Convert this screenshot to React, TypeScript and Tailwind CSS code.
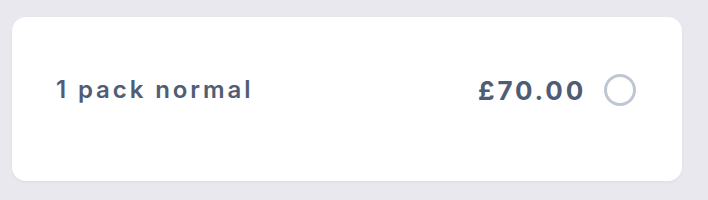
export default function App() {
  return (
    <main className="min-h-[200px] w-full bg-[#e8e8ee] pl-3 pt-[17px]">
      <div className="h-[164px] w-[670px] rounded-[14px] bg-white pl-[44px] pr-[46px] pt-[57px] shadow-[0_1px_3px_rgba(30,40,70,0.06)] font-['Inter',sans-serif]">
        <div className="flex h-8 items-center justify-between">
          <span className="text-[24px] font-semibold tracking-[2.9px] text-[#505d75]">1 pack normal</span>
          <div className="flex items-center gap-[18px]">
            <span className="text-[26px] font-bold tracking-[2.8px] text-[#4f5c74]">£70.00</span>
            <span className="block h-8 w-8 rounded-full border-[3px] border-[#bfc6d3]" />
          </div>
        </div>
      </div>
    </main>
  );
}
